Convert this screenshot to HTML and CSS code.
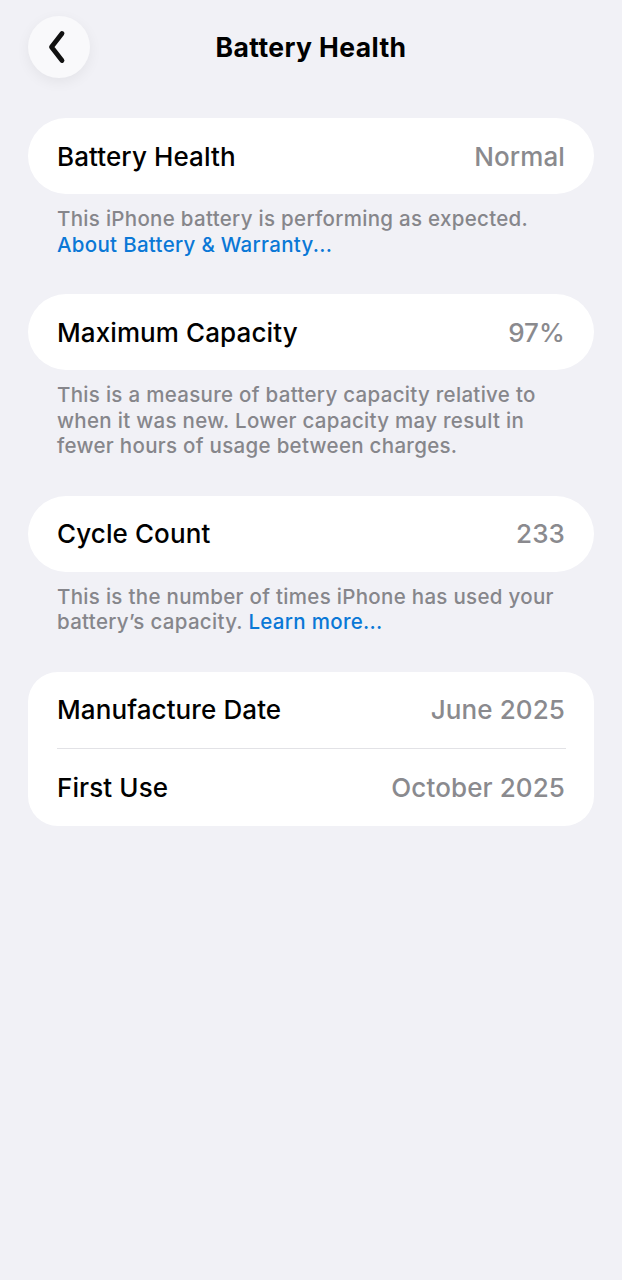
FILE: index.html
```html
<!DOCTYPE html>
<html lang="en">
<head>
<meta charset="utf-8">
<title>Battery Health</title>
<link rel="stylesheet" href="styles.css">
</head>
<body>
<div class="screen">
  <header class="nav">
    <button class="back" aria-label="Back">
      <svg width="30" height="34" viewBox="0 0 30 34"><path d="M20 3.5 L9.5 17 L20 30.5" fill="none" stroke="#111" stroke-width="4.8" stroke-linecap="round" stroke-linejoin="round"/></svg>
    </button>
    <h1 class="title">Battery Health</h1>
    <span></span>
  </header>

  <section class="card">
    <div class="row"><span class="label">Battery Health</span><span class="value">Normal</span></div>
  </section>
  <p class="foot">This iPhone battery is performing as expected. <a class="link">About Battery &amp; Warranty...</a></p>

  <section class="card">
    <div class="row"><span class="label">Maximum Capacity</span><span class="value">97%</span></div>
  </section>
  <p class="foot">This is a measure of battery capacity relative to when it was new. Lower capacity may result in fewer hours of usage between charges.</p>

  <section class="card">
    <div class="row"><span class="label">Cycle Count</span><span class="value">233</span></div>
  </section>
  <p class="foot">This is the number of times iPhone has used your battery’s capacity. <a class="link">Learn more...</a></p>

  <section class="card card-multi">
    <div class="row"><span class="label">Manufacture Date</span><span class="value">June 2025</span></div>
    <div class="sep"></div>
    <div class="row"><span class="label">First Use</span><span class="value">October 2025</span></div>
  </section>
</div>
</body>
</html>
```

FILE: styles.css
```css
html, body {
  margin: 0;
  padding: 0;
  background: #f1f1f6;
}
body {
  font-family: Inter, "Noto Sans", "Liberation Sans", sans-serif;
  color: #000;
  width: 622px;
  min-height: 1280px;
}
.screen {
  padding: 16px 28px 0;
}
.nav {
  display: grid;
  grid-template-columns: 1fr auto 1fr;
  align-items: center;
  height: 62px;
  margin-bottom: 40px;
}
.back {
  width: 62px;
  height: 62px;
  border-radius: 50%;
  border: none;
  padding: 0 4px 0 0;
  background: #f9f9fb;
  box-shadow: 0 4px 14px rgba(0, 0, 0, 0.06);
  display: flex;
  align-items: center;
  justify-content: center;
}
.title {
  margin: 0;
  font-size: 26.5px;
  font-weight: 700;
  letter-spacing: 0.4px;
}
.card {
  background: #fff;
  border-radius: 38px;
}
.card-multi {
  border-radius: 30px;
}
.row {
  height: 76px;
  padding: 0 29px;
  display: flex;
  align-items: center;
  justify-content: space-between;
  font-size: 26px;
  font-weight: 500;
  letter-spacing: 0.1px;
}
.value {
  color: #8a8a8e;
  font-weight: 500;
}
.sep {
  height: 1px;
  background: #e2e2e6;
  margin: 0 28px 0 29px;
}
.card-multi .row:last-child {
  height: 77px;
}
.foot {
  margin: 12px 0 37px;
  padding: 0 29px;
  font-size: 20.5px;
  line-height: 25.5px;
  color: #86868b;
  font-weight: 500;
  letter-spacing: 0.3px;
}
.link {
  color: #0a78d6;
}
```
